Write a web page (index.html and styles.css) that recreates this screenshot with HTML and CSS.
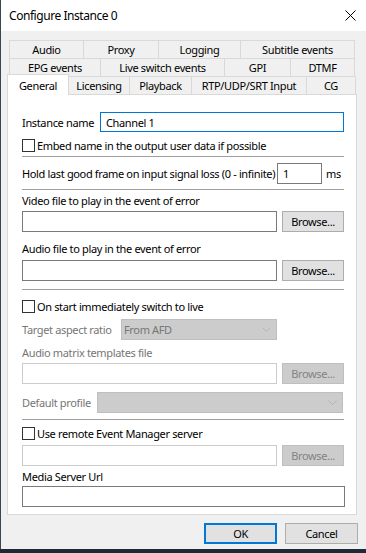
FILE: index.html
```html
<!DOCTYPE html>
<html lang="en">

<head>
    <meta charset="UTF-8">
    <title>Configure Instance 0</title>
    <link rel="stylesheet" href="styles.css">
</head>

<body>
    <div class="window">
        <div class="titlebar">
            <span class="title">Configure Instance 0</span>
            <svg class="close" width="11" height="11" viewBox="0 0 11 11">
                <path d="M0.5 0.5 L10.5 10.5 M10.5 0.5 L0.5 10.5" stroke="#000" stroke-width="1" fill="none"/>
            </svg>
        </div>

        <!-- Tab headers -->
        <div class="tabs">
            <div class="tab-row row-1">
                <div class="tab">Audio</div>
                <div class="tab">Proxy</div>
                <div class="tab">Logging</div>
                <div class="tab">Subtitle events</div>
            </div>
            <div class="tab-row row-2">
                <div class="tab">EPG events</div>
                <div class="tab">Live switch events</div>
                <div class="tab">GPI</div>
                <div class="tab">DTMF</div>
            </div>
            <div class="tab-row row-3">
                <div class="tab selected">General</div>
                <div class="tab">Licensing</div>
                <div class="tab">Playback</div>
                <div class="tab">RTP/UDP/SRT Input</div>
                <div class="tab">CG</div>
            </div>
        </div>

        <!-- General page -->
        <div class="panel">
            <div class="field-row instance-row">
                <span>Instance name</span>
                <input type="text" class="textbox focused" value="Channel 1">
            </div>

            <div class="check-row embed-row">
                <input type="checkbox" class="check">
                <span>Embed name in the output user data if possible</span>
            </div>

            <div class="sep sep-1"></div>

            <div class="field-row hold-row">
                <span class="hold-label">Hold last good frame on input signal loss (0 - infinite)</span>
                <input type="text" class="textbox hold-input" value="1">
                <span class="unit">ms</span>
            </div>

            <div class="sep sep-2"></div>

            <div class="label video-label">Video file to play in the event of error</div>
            <div class="file-row video-row">
                <input type="text" class="textbox file-input">
                <button class="btn browse">Browse...</button>
            </div>

            <div class="label audio-label">Audio file to play in the event of error</div>
            <div class="file-row audio-row">
                <input type="text" class="textbox file-input">
                <button class="btn browse">Browse...</button>
            </div>

            <div class="sep sep-3"></div>

            <div class="check-row live-row">
                <input type="checkbox" class="check">
                <span>On start immediately switch to live</span>
            </div>

            <div class="field-row aspect-row">
                <span class="muted aspect-label">Target aspect ratio</span>
                <div class="combo aspect-combo">
                    <span>From AFD</span>
                    <svg width="9" height="5" viewBox="0 0 9 5"><path d="M0.5 0.5 L4.5 4.5 L8.5 0.5" stroke="#b4b4b4" fill="none"/></svg>
                </div>
            </div>

            <div class="label muted matrix-label">Audio matrix templates file</div>
            <div class="file-row matrix-row">
                <input type="text" class="textbox file-input disabled" disabled>
                <button class="btn browse" disabled>Browse...</button>
            </div>

            <div class="field-row profile-row">
                <span class="muted profile-label">Default profile</span>
                <div class="combo profile-combo">
                    <span></span>
                    <svg width="9" height="5" viewBox="0 0 9 5"><path d="M0.5 0.5 L4.5 4.5 L8.5 0.5" stroke="#b4b4b4" fill="none"/></svg>
                </div>
            </div>

            <div class="sep sep-4"></div>

            <div class="check-row remote-row">
                <input type="checkbox" class="check">
                <span>Use remote Event Manager server</span>
            </div>
            <div class="file-row server-row">
                <input type="text" class="textbox file-input disabled" disabled>
                <button class="btn browse" disabled>Browse...</button>
            </div>

            <div class="label media-label">Media Server Url</div>
            <input type="text" class="textbox media-input">
        </div>

        <!-- Dialog buttons -->
        <div class="buttons">
            <button class="btn dialog-btn default">OK</button>
            <button class="btn dialog-btn">Cancel</button>
        </div>
    </div>
</body>

</html>
```

FILE: styles.css
```css
body {
    margin: 0;
    background-color: #1f2a34;
    font-family: "Noto Sans", sans-serif;
    font-size: 11px;
    letter-spacing: -0.35px;
    color: #000;
    white-space: nowrap;
}

/* Dialog frame */
.window {
    width: 365px;
    height: 549px;
    border-left: 1px solid #3a4652;
    background-color: #f0f0f0;
    display: flex;
    flex-direction: column;
}

.titlebar {
    height: 31px;
    box-sizing: border-box;
    background-color: #ffffff;
    display: flex;
    align-items: center;
    justify-content: space-between;
    padding: 0 10px 0 8px;
    font-size: 12px;
    letter-spacing: -0.45px;
}

.close {
    display: block;
}

/* Tabs */
.tabs {
    padding-top: 9px;
}

.tab-row {
    display: flex;
    height: 19px;
    margin-left: 8px;
}

.tab-row + .tab-row {
    margin-top: -1px;
}

.tab {
    box-sizing: border-box;
    height: 19px;
    border: 1px solid #d9d9d9;
    margin-right: -1px;
    display: flex;
    align-items: center;
    justify-content: center;
    background-color: #f0f0f0;
}

.row-1 .tab:nth-child(1) { width: 75px; }
.row-1 .tab:nth-child(2) { width: 76px; }
.row-1 .tab:nth-child(3) { width: 83px; }
.row-1 .tab:nth-child(4) { width: 115px; }

.row-2 .tab:nth-child(1) { width: 92px; }
.row-2 .tab:nth-child(2) { width: 125px; }
.row-2 .tab:nth-child(3) { width: 67px; }
.row-2 .tab:nth-child(4) { width: 65px; }

.row-3 {
    margin-left: 6px;
    align-items: flex-end;
}

.row-3 .tab:nth-child(1) { width: 62px; }
.row-3 .tab:nth-child(2) { width: 62px; }
.row-3 .tab:nth-child(3) { width: 63px; }
.row-3 .tab:nth-child(4) { width: 116px; }
.row-3 .tab:nth-child(5) { width: 50px; }

.tab.selected {
    height: 21px;
    border-bottom: none;
    background-color: #ffffff;
    position: relative;
    z-index: 1;
}

/* Page */
.panel {
    box-sizing: border-box;
    width: 350px;
    height: 421px;
    margin: -1px 0 0 6px;
    border: 1px solid #d9d9d9;
    background-color: #ffffff;
    padding: 17px 12px 0 14px;
    display: flex;
    flex-direction: column;
}

.field-row,
.file-row {
    display: flex;
    align-items: center;
    flex-shrink: 0;
}

.file-row {
    justify-content: space-between;
}

.label {
    line-height: 16px;
    height: 16px;
    flex-shrink: 0;
}

.muted {
    color: #767676;
}

.textbox {
    box-sizing: border-box;
    height: 21px;
    margin: 0;
    padding: 0 0 0 5px;
    border: 1px solid #7a7a7a;
    background-color: #ffffff;
    font-family: inherit;
    font-size: 11px;
    letter-spacing: inherit;
    color: #000;
    outline: none;
}

.textbox.focused {
    border-color: #0078d7;
}

.textbox.disabled {
    border-color: #cccccc;
}

.instance-row {
    justify-content: space-between;
}

.instance-row .textbox {
    width: 244px;
    height: 20px;
}

.check-row {
    display: flex;
    align-items: center;
    height: 13px;
    gap: 2px;
    flex-shrink: 0;
}

.check {
    appearance: none;
    -webkit-appearance: none;
    width: 13px;
    height: 13px;
    margin: 0;
    border: 1px solid #333333;
    background-color: #ffffff;
}

.sep {
    height: 1px;
    background-color: #a0a0a0;
    flex-shrink: 0;
}

.hold-label {
    width: 255px;
}

.hold-input {
    width: 45px;
}

.unit {
    margin-left: 4px;
}

.file-input {
    width: 255px;
}

.btn {
    box-sizing: border-box;
    height: 21px;
    margin: 0;
    padding: 0;
    border: 1px solid #adadad;
    background-color: #e1e1e1;
    font-family: inherit;
    font-size: 11px;
    letter-spacing: inherit;
    color: #000;
}

.btn:disabled {
    border-color: #bfbfbf;
    background-color: #cccccc;
    color: #838383;
}

.browse {
    width: 62px;
}

.combo {
    box-sizing: border-box;
    height: 21px;
    border: 1px solid #bfbfbf;
    background-color: #cccccc;
    color: #767676;
    display: flex;
    align-items: center;
    justify-content: space-between;
    padding: 0 5px 0 2px;
}

.aspect-label {
    width: 99px;
}

.aspect-combo {
    width: 156px;
}

.profile-label {
    width: 75px;
}

.profile-combo {
    width: 246px;
}

.media-input {
    width: 323px;
    flex-shrink: 0;
}

/* Vertical spacing, matched to the dialog */
.embed-row { margin-top: 7px; }
.sep-1 { margin-top: 4px; }
.hold-row { margin-top: 6px; }
.sep-2 { margin-top: 5px; }
.video-label { margin-top: 3px; }
.video-row { margin-top: 2px; }
.audio-label { margin-top: 9px; }
.audio-row { margin-top: 3px; }
.sep-3 { margin-top: 8px; }
.live-row { margin-top: 10px; }
.aspect-row { margin-top: 6px; }
.matrix-label { margin-top: 5px; }
.matrix-row { margin-top: 2px; }
.profile-row { margin-top: 8px; }
.sep-4 { margin-top: 6px; }
.remote-row { margin-top: 7px; }
.server-row { margin-top: 5px; }
.media-label { margin-top: 3px; }
.media-input { margin-top: 1px; }

/* Dialog buttons */
.buttons {
    display: flex;
    justify-content: flex-end;
    gap: 8px;
    padding-right: 8px;
    margin-top: 8px;
}

.dialog-btn {
    width: 73px;
}

.dialog-btn.default {
    border: 2px solid #0078d7;
}
```
